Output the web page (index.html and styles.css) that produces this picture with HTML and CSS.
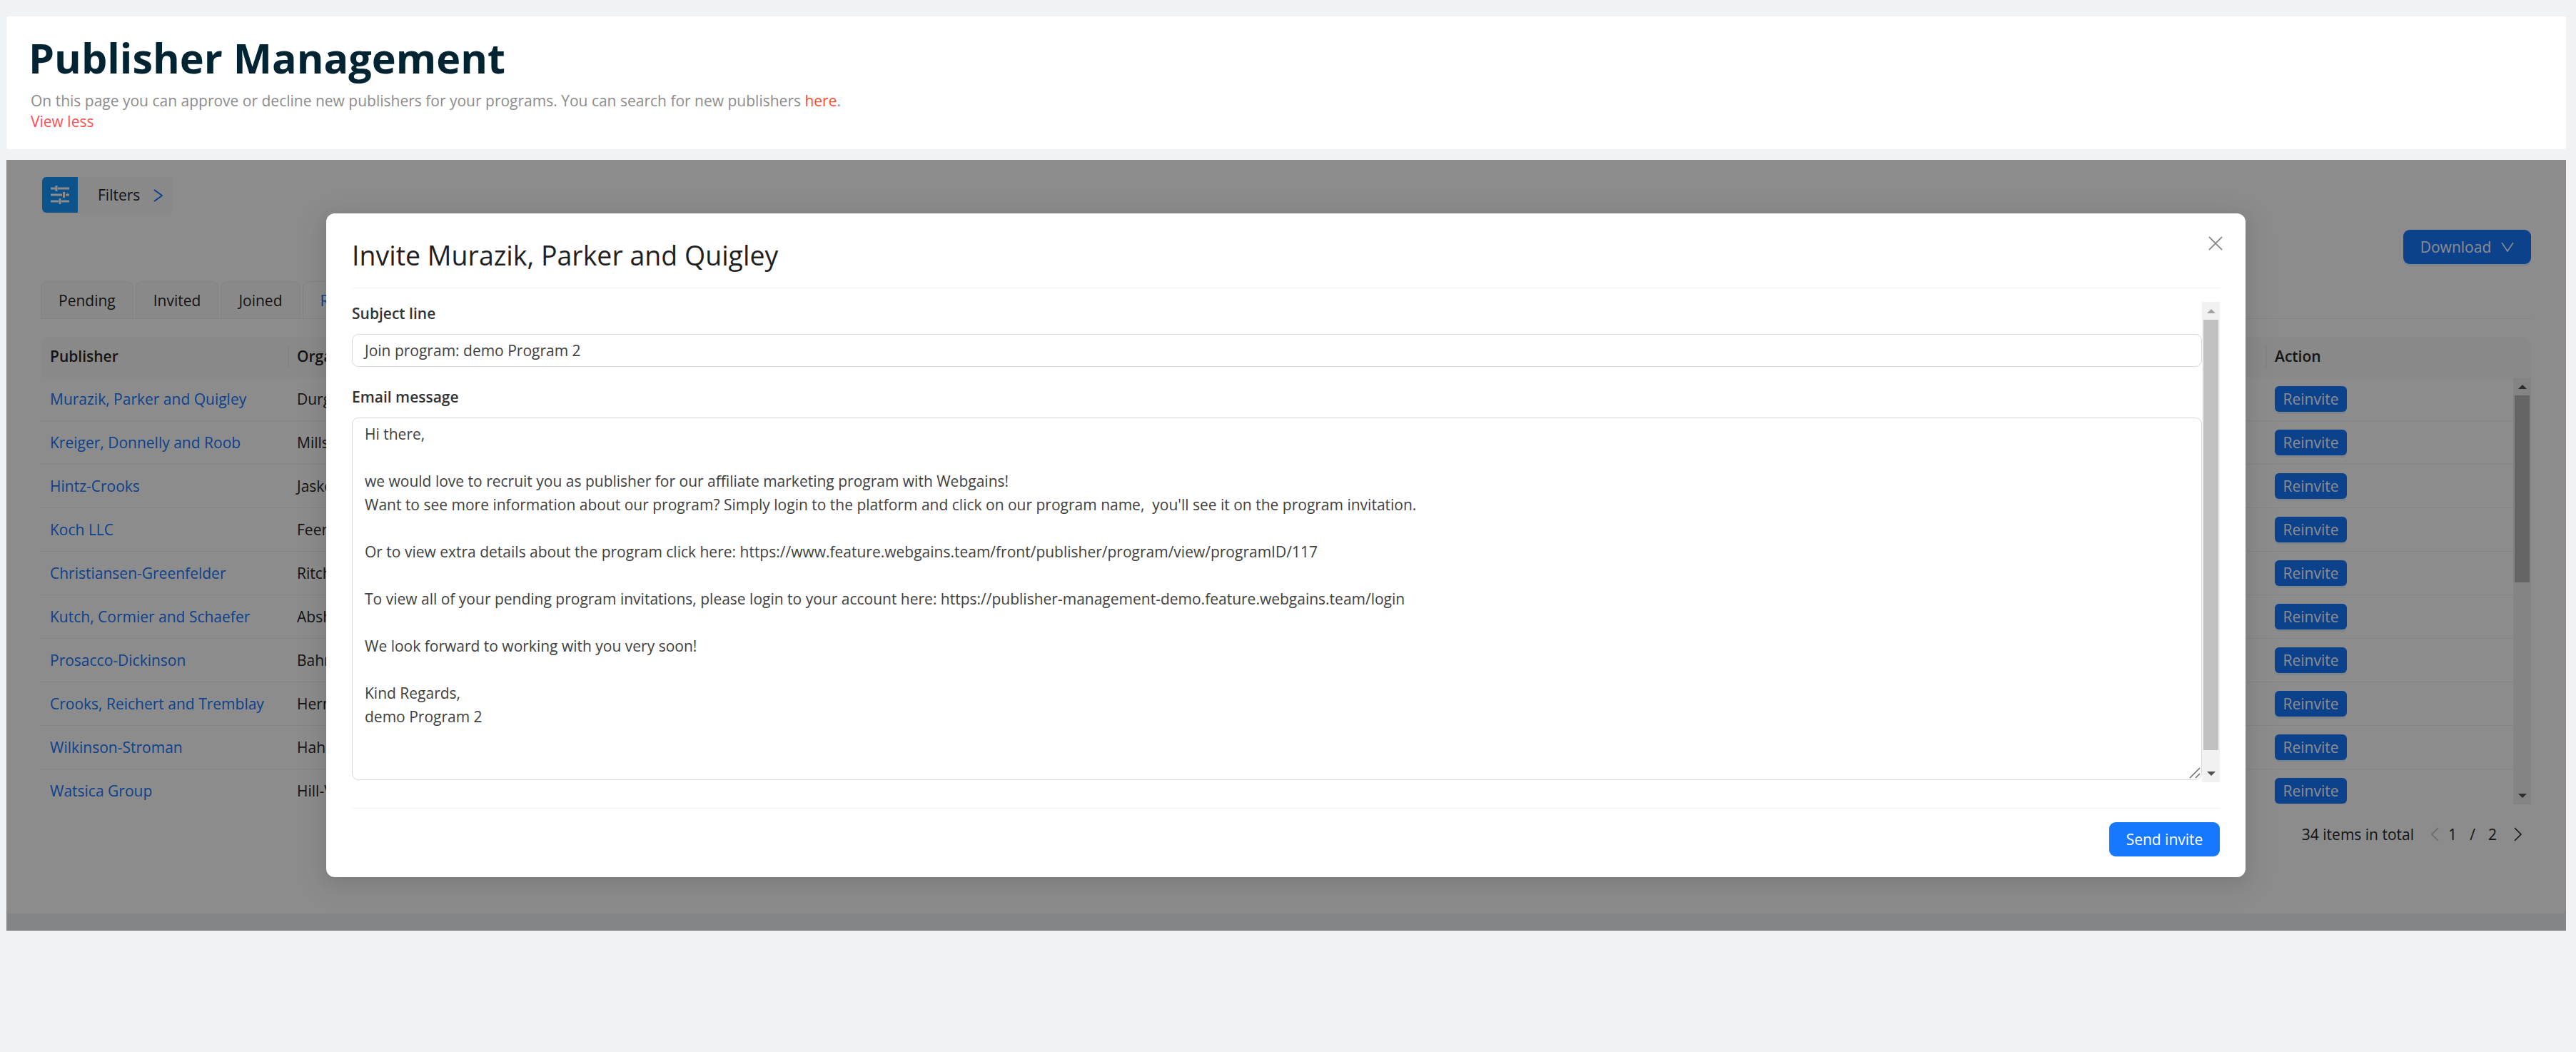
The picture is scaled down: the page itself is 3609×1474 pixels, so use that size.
FILE: index.html
```html
<!DOCTYPE html>
<html lang="en">
<head>
<meta charset="utf-8">
<title>Publisher Management</title>
<link rel="stylesheet" href="styles.css">
</head>
<body>
<div class="page">
  <header class="intro">
    <h1 class="intro-title">Publisher Management</h1>
    <p class="intro-text">On this page you can approve or decline new publishers for your programs. You can search for new publishers <a class="intro-link" href="#">here</a>.</p>
    <a class="intro-less" href="#">View less</a>
  </header>
  <section class="panel">
    <div class="card">
      <div class="filter-row">
        <div class="filter">
          <span class="filter-icon">
            <svg width="26" height="26" viewBox="0 0 26 26" fill="none" stroke="#fff" stroke-width="3"><path d="M0 4h6.500M10 4h16M8 0v8M0 13h16M21 13h5M18.500 9v8M0 22h11M15 22h11M13 18v8"/></svg>
          </span>
          <span class="filter-label">Filters</span>
          <svg class="filter-chev" width="13" height="18" viewBox="0 0 13 18" fill="none" stroke="#1677ff" stroke-width="2"><path d="M1 1l11 8-11 8"/></svg>
        </div>
      </div>
      <div class="download-row">
        <button class="download">Download
          <svg width="18" height="14" viewBox="0 0 18 14" fill="none" stroke="#fff" stroke-width="1.600"><path d="M1 1l8 12 8-12"/></svg>
        </button>
      </div>
      <div class="tabs">
        <span class="tab">Pending</span>
        <span class="tab">Invited</span>
        <span class="tab">Joined</span>
        <span class="tab tab-active">Rejected</span>
      </div>
      <div class="table">
        <div class="thead">
          <div class="th col-pub">Publisher</div>
          <div class="th col-org">Organisation</div>
          <div class="th col-act">Action</div>
        </div>
        <div class="tbody">
          <div class="rows">
            <div class="row"><a class="cell col-pub pub-link" href="#">Murazik, Parker and Quigley</a><div class="cell col-org">Durgan</div><div class="cell col-act"><button class="reinvite">Reinvite</button></div></div>
            <div class="row"><a class="cell col-pub pub-link" href="#">Kreiger, Donnelly and Roob</a><div class="cell col-org">Mills</div><div class="cell col-act"><button class="reinvite">Reinvite</button></div></div>
            <div class="row"><a class="cell col-pub pub-link" href="#">Hintz-Crooks</a><div class="cell col-org">Jaskolski</div><div class="cell col-act"><button class="reinvite">Reinvite</button></div></div>
            <div class="row"><a class="cell col-pub pub-link" href="#">Koch LLC</a><div class="cell col-org">Feeney</div><div class="cell col-act"><button class="reinvite">Reinvite</button></div></div>
            <div class="row"><a class="cell col-pub pub-link" href="#">Christiansen-Greenfelder</a><div class="cell col-org">Ritchie</div><div class="cell col-act"><button class="reinvite">Reinvite</button></div></div>
            <div class="row"><a class="cell col-pub pub-link" href="#">Kutch, Cormier and Schaefer</a><div class="cell col-org">Abshire</div><div class="cell col-act"><button class="reinvite">Reinvite</button></div></div>
            <div class="row"><a class="cell col-pub pub-link" href="#">Prosacco-Dickinson</a><div class="cell col-org">Bahringer</div><div class="cell col-act"><button class="reinvite">Reinvite</button></div></div>
            <div class="row"><a class="cell col-pub pub-link" href="#">Crooks, Reichert and Tremblay</a><div class="cell col-org">Hermann</div><div class="cell col-act"><button class="reinvite">Reinvite</button></div></div>
            <div class="row"><a class="cell col-pub pub-link" href="#">Wilkinson-Stroman</a><div class="cell col-org">Hahn</div><div class="cell col-act"><button class="reinvite">Reinvite</button></div></div>
            <div class="row"><a class="cell col-pub pub-link" href="#">Watsica Group</a><div class="cell col-org">Hill-Volkman</div><div class="cell col-act"><button class="reinvite">Reinvite</button></div></div>
          </div>
          <div class="sbar sbar-table">
            <span class="sbar-btn"><i class="arrow-up"></i></span>
            <span class="sbar-track"><span class="sbar-thumb thumb-table"></span></span>
            <span class="sbar-btn"><i class="arrow-down"></i></span>
          </div>
        </div>
      </div>
      <div class="pager">
        <span class="pager-total">34 items in total</span>
        <svg class="pager-prev" width="12" height="20" viewBox="0 0 12 20" fill="none" stroke="#bfbfbf" stroke-width="1.600"><path d="M11 1L2 10l9 9"/></svg>
        <span class="pager-num">1</span>
        <span class="pager-num">/</span>
        <span class="pager-num">2</span>
        <svg class="pager-next" width="12" height="20" viewBox="0 0 12 20" fill="none" stroke="#262626" stroke-width="1.600"><path d="M1 1l9 9-9 9"/></svg>
      </div>
    </div>
    <div class="overlay">
      <div class="modal">
        <svg class="modal-close" width="20" height="20" viewBox="0 0 20 20" fill="none" stroke="#8c8c8c" stroke-width="1.800"><path d="M1 1l18 18M19 1L1 19"/></svg>
        <h2 class="modal-title">Invite Murazik, Parker and Quigley</h2>
        <div class="modal-body">
          <div class="form">
            <label class="field-label">Subject line</label>
            <div class="input">Join program: demo Program 2</div>
            <label class="field-label field-label-2">Email message</label>
            <div class="textarea">Hi there,

we would love to recruit you as publisher for our affiliate marketing program with Webgains!
Want to see more information about our program? Simply login to the platform and click on our program name,  you'll see it on the program invitation.

Or to view extra details about the program click here: https://www.feature.webgains.team/front/publisher/program/view/programID/117

To view all of your pending program invitations, please login to your account here: https://publisher-management-demo.feature.webgains.team/login

We look forward to working with you very soon!

Kind Regards,
demo Program 2<svg class="grip" width="16" height="16" viewBox="0 0 16 16" fill="none" stroke="#666" stroke-width="1.500"><path d="M1 15L15 1M9 15l6-6"/></svg></div>
          </div>
          <div class="sbar sbar-modal">
            <span class="sbar-btn"><i class="arrow-up arrow-light"></i></span>
            <span class="sbar-track"><span class="sbar-thumb thumb-modal"></span></span>
            <span class="sbar-btn"><i class="arrow-down"></i></span>
          </div>
        </div>
        <div class="modal-footer"><button class="send">Send invite</button></div>
      </div>
    </div>
  </section>
</div>
</body>
</html>
```
FILE: styles.css
```css
* { box-sizing: border-box; }
html, body { margin: 0; padding: 0; }
body { background: #eff3f6; font-family: "Open Sans", sans-serif; font-size: 21px; color: #262626; }
a { text-decoration: none; }
button { font-family: inherit; border: 0; cursor: pointer; }
.page { padding: 23px 14px 170px 9px; height: 1474px; display: flex; flex-direction: column; gap: 15px; }
.intro { background: #fff; height: 186px; padding: 24px 31px; border-radius: 3px; }
.intro-title { margin: 0; font-size: 57.500px; line-height: 68px; font-weight: 700; color: #012433; }
.intro-text { margin: 12px 0 0 3px; line-height: 29px; color: #8c8c8c; }
.intro-link { color: #ff4d2e; }
.intro-less { display: block; margin-left: 3px; line-height: 29px; color: #ff4d4f; }
.panel { position: relative; height: 1080px; display: flex; flex-direction: column; }
.card { height: 1056px; background: #fff; border-radius: 0 0 6px 6px; padding: 24px 49px 0 48px; }
.filter-row { height: 52px; padding-left: 2px; }
.filter { display: inline-flex; align-items: center; width: 183px; height: 52px; background: #fafafa; border-radius: 6px; }
.filter-icon { width: 50px; height: 50px; margin-bottom: 2px; background: #1697ff; border-radius: 6px 0 0 6px; display: flex; align-items: center; justify-content: center; }
.filter-label { margin: -2px 0 0 28px; }
.filter-chev { margin: -1px 0 0 19px; }
.download-row { display: flex; justify-content: flex-end; margin-top: 22px; height: 48px; }
.download { width: 179px; height: 48px; background: #1677ff; color: #fff; font-size: 21px; border-radius: 9px; display: flex; align-items: center; justify-content: center; gap: 14px; box-shadow: 0 3px 0 rgba(5,145,255,.1); }
.tabs { display: flex; gap: 3px; margin-top: 24px; height: 53px; border-bottom: 1.500px solid #f0f0f0; }
.tab { padding: 0 24px; line-height: 52px; background: #fafafa; border: 1.500px solid #f0f0f0; border-bottom: 0; border-radius: 9px 9px 0 0; }
.tab-active { color: #1677ff; background: #fff; }
.table { margin-top: 25px; }
.thead { display: flex; height: 57px; padding-bottom: 3px; background: #fafafa; border-radius: 12px 12px 0 0; font-weight: 600; align-items: center; }
.th { position: relative; }
.th + .th::before { content: ""; position: absolute; left: -13px; top: 50%; height: 33px; margin-top: -16px; width: 1.500px; background: #f0f0f0; }
.col-pub { width: 359px; padding-left: 13px; flex: none; }
.col-org { width: 2771px; flex: none; }
.col-act { flex: 1; }
.tbody { display: flex; height: 598px; overflow: hidden; }
.rows { flex: 1; }
.row { display: flex; height: 61px; align-items: center; border-bottom: 1.500px solid #f0f0f0; }
.pub-link { color: #1677ff; }
.reinvite { width: 101px; height: 36px; padding: 0; background: #1677ff; color: #fff; font-size: 21px; line-height: 36px; border-radius: 6px; box-shadow: 0 3px 0 rgba(5,145,255,.1); }
.sbar { width: 25px; flex: none; display: flex; flex-direction: column; background: #f1f1f1; }
.sbar-btn { height: 25px; flex: none; display: flex; align-items: center; justify-content: center; }
.sbar-track { flex: 1; display: flex; justify-content: center; }
.sbar-thumb { width: 21px; background: #c1c1c1; display: block; }
.thumb-table { height: 262px; background: #b9b9b9; }
.thumb-modal { height: 603px; }
.arrow-up { width: 0; height: 0; border: 6px solid transparent; border-top: 0; border-bottom: 6px solid #505050; }
.arrow-light { border-bottom-color: #a3a3a3; }
.arrow-down { width: 0; height: 0; border: 6px solid transparent; border-bottom: 0; border-top: 6px solid #505050; }
.pager { display: flex; align-items: center; justify-content: flex-end; margin-top: 24px; height: 36px; }
.pager-total { margin-right: 23px; }
.pager-prev { margin-right: 5px; }
.pager-num { width: 28px; text-align: center; }
.pager-next { margin-left: 16px; margin-right: 12px; }
.overlay { position: absolute; inset: 0; background: rgba(0,0,0,.45); display: flex; align-items: center; justify-content: center; }
.modal { position: relative; width: 2689px; height: 930px; margin-right: 1px; background: #fff; border-radius: 12px; padding: 0 36px; display: flex; flex-direction: column; box-shadow: 0 9px 42px 12px rgba(0,0,0,.05), 0 6px 24px 0 rgba(0,0,0,.08); }
.modal-close { position: absolute; right: 32px; top: 32px; }
.modal-title { margin: 0; height: 105px; padding-top: 32px; font-size: 37.500px; line-height: 54px; font-weight: 400; color: #1f1f1f; border-bottom: 1.500px solid #f0f0f0; }
.modal-body { display: flex; margin-top: 19px; height: 673px; }
.form { flex: 1; display: flex; flex-direction: column; }
.field-label { font-weight: 600; color: #333; line-height: 32px; margin-top: 0; }
.field-label-2 { margin-top: 26px; }
.input { height: 46px; margin-top: 13px; padding: 0 17px; line-height: 44px; border: 1.500px solid #d9d9d9; border-radius: 9px; color: #404040; }
.textarea { position: relative; height: 508px; margin-top: 13px; padding: 6px 17px; white-space: pre-wrap; line-height: 33px; border: 1.500px solid #d9d9d9; border-radius: 9px; color: #404040; }
.grip { position: absolute; right: 1px; bottom: 1px; }
.modal-footer { margin-top: 36px; padding-top: 19px; border-top: 1.500px solid #f0f0f0; display: flex; justify-content: flex-end; }
.send { width: 155px; height: 48px; background: #1677ff; color: #fff; font-size: 21px; border-radius: 9px; padding: 0; }
```
